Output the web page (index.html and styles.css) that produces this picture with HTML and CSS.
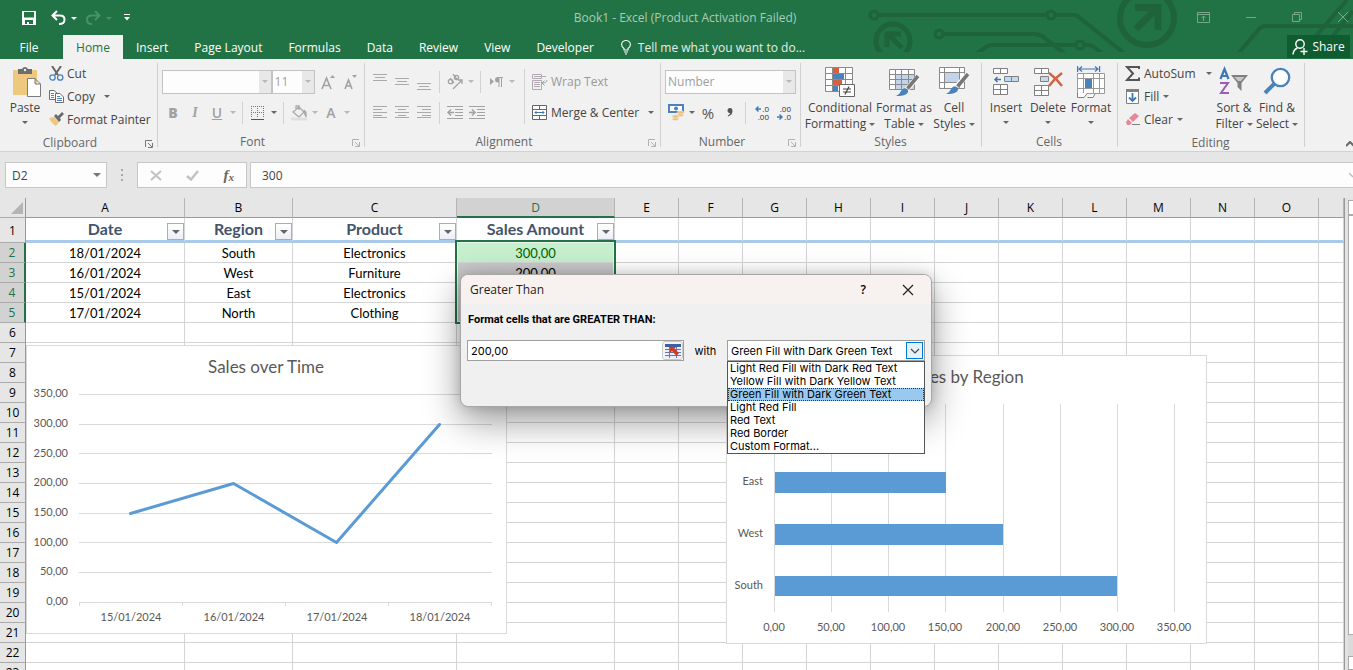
FILE: index.html
```html
<!DOCTYPE html>
<html lang="en">
<head>
<meta charset="utf-8">
<title>Book1 - Excel</title>
<link rel="stylesheet" href="styles.css">
</head>
<body>
<div class="app">
  <header class="top">
    <svg class="decor" width="503" height="52" viewBox="0 0 503 52" fill="none" stroke="#1e633b" aria-hidden="true">
      <g stroke-width="3">
        <circle cx="24" cy="15" r="4"/><circle cx="201" cy="15" r="4"/><circle cx="89" cy="34" r="4"/><circle cx="230" cy="45" r="4"/>
      </g>
      <g stroke-width="4">
        <path d="M29 15H196M206 15H223Q227 15 230 18L275 54M94 34H184Q188 34 192 36L215 54M126 54L136 47Q139 45 143 45H225M235 45Q240 44 244 47L253 54"/>
        <path d="M388 54L409 29Q412 26 416 26H503M465 37L497 0M482 37L503 11"/>
      </g>
      <circle cx="297" cy="18" r="27" stroke-width="6"/><circle cx="43" cy="41" r="17" stroke-width="5"/>
      <path d="M285 7.500H308V30M306 9L286 29" stroke-width="7"/>
      <path d="M37 47V34H51M38 34L52 48" stroke-width="5"/>
    </svg>
    <div class="titlebar">
      <div class="quick">
        <button class="ic" aria-label="Save"><svg width="14" height="14" viewBox="0 0 14 14"><path fill="#fff" fill-rule="evenodd" d="M0 0H14V14H0ZM2 1V6.500H12V1ZM3 9V13H5V11H7V13H11V9Z"/></svg></button>
        <button class="ic undo" aria-label="Undo"><svg width="25" height="14" viewBox="0 0 25 14"><path fill="none" stroke="#fff" stroke-width="2" d="M6 0L1.500 4.500L6 9M2 4.500H9Q13.500 4.500 13.500 8.500Q13.500 13 8 13"/><path fill="#fff" d="M20 6H26L23 9Z"/></svg></button>
        <button class="ic redo" aria-label="Redo"><svg width="26" height="14" viewBox="0 0 26 14"><path fill="none" stroke="#4b8f69" stroke-width="2" d="M9 0L13.500 4.500L9 9M13 4.500H6Q1 4.500 1 8.500Q1 13 6 13"/><path fill="#4b8f69" d="M20 6H26L23 9Z"/></svg></button>
        <button class="ic" aria-label="Customize Quick Access Toolbar"><svg width="6" height="7" viewBox="0 0 6 7"><path fill="#fff" d="M0 0H6V1H0ZM0 3H6L3 6.500Z"/></svg></button>
      </div>
      <h1 class="doc">Book1 - Excel (Product Activation Failed)</h1>
      <div class="wins">
        <button class="ic" aria-label="Ribbon Display Options"><svg width="13" height="11" viewBox="0 0 13 11" fill="none" stroke="#79a78d"><path d="M.5.5H12.500V10.500H.5ZM.5 2.500H12.500M6.500 9V4M4.500 6L6.500 4L8.500 6"/></svg></button>
        <button class="ic" aria-label="Minimize"><svg width="10" height="11" viewBox="0 0 10 11" stroke="#79a78d"><path d="M0 5.500H10"/></svg></button>
        <button class="ic" aria-label="Restore"><svg width="10" height="11" viewBox="0 0 10 11" fill="none" stroke="#79a78d"><path d="M.5 2.500H7.500V9.500H.5ZM2.500 2.500V.5H9.500V7.500H7.500"/></svg></button>
        <button class="ic" aria-label="Close"><svg width="10" height="11" viewBox="0 0 10 11" stroke="#79a78d"><path d="M0 0L10 10M10 0L0 10"/></svg></button>
      </div>
    </div>
    <nav class="tabs">
      <button class="tab file">File</button>
      <button class="tab active">Home</button>
      <button class="tab">Insert</button>
      <button class="tab">Page Layout</button>
      <button class="tab">Formulas</button>
      <button class="tab">Data</button>
      <button class="tab">Review</button>
      <button class="tab">View</button>
      <button class="tab">Developer</button>
      <button class="tell"><svg width="10" height="15" viewBox="0 0 10 15" fill="none" stroke="#fff"><path d="M3 10V8.500Q.6 7 .6 4.600A4.400 4.100 0 0 1 9.400 4.600Q9.400 7 7 8.500V10ZM3 12H7M4 14H6" stroke-width="1.100"/></svg>Tell me what you want to do...</button>
      <button class="share"><svg width="16" height="16" viewBox="0 0 16 16" fill="none" stroke="#fff" stroke-width="1.400"><circle cx="8" cy="5" r="4.200"/><path d="M1 15.500Q1.500 10.500 5.500 9M8.500 12.500H15.500M12 9V16"/></svg>Share</button>
    </nav>
  </header>

  <div class="ribbon">
    <section class="group g-clip">
      <div class="body">
        <button class="big paste"><svg width="32" height="30" viewBox="-4 0 32 30"><path fill="#edc87e" d="M0 3H24V28H0Z"/><path fill="#6d6d6d" d="M5 2H9Q10 0 12 0Q14 0 15 2H19V7H5Z"/><circle cx="12" cy="3" r="1.200" fill="#f1f1f1"/><path fill="#fff" stroke="#7c7c7c" d="M14.500 11.500H22L27.500 17V29.500H14.500ZM22 11.500V17H27.500"/></svg><span>Paste</span><i class="caret"></i></button>
        <div class="stack">
          <button class="row"><svg width="15" height="15" viewBox="0 0 15 15" fill="none"><path stroke="#666" stroke-width="2" d="M3 0L9 9M12 0L6 9"/><circle cx="3.500" cy="11.500" r="2.700" stroke="#4a82bb" stroke-width="1.300"/><circle cx="11.200" cy="11.500" r="2.700" stroke="#4a82bb" stroke-width="1.300"/></svg>Cut</button>
          <button class="row"><svg width="15" height="15" viewBox="0 0 15 15"><path fill="#fff" stroke="#6d6d6d" d="M.5 1.500H5L8.500 4.500V10.500H.5Z"/><path fill="#fff" stroke="#6d6d6d" d="M6.500 4.500H11L14.500 8V13.500H6.500Z"/><path stroke="#4a82bb" d="M2 4.500H5M2 6.500H5M2 8.500H5M8 7.500H11M8 9.500H13M8 11.500H13"/></svg>Copy<i class="caret wide"></i></button>
          <button class="row"><svg width="15" height="15" viewBox="0 0 15 15"><path fill="#edc87e" d="M0 6L5 5L10 10L7 14Q3 12 0 6Z"/><path fill="#6d6d6d" d="M5 4L7 2L9 4L13 0L15 2L11 6L12 8L10 10Z"/></svg>Format Painter</button>
        </div>
      </div>
      <div class="cap">Clipboard<svg class="launch dark" width="8" height="8" viewBox="0 0 8 8"><path d="M.5 7V.5H7M3 3L7 7M7.500 3V7.500H3"/></svg></div>
    </section>

    <section class="group g-font">
      <div class="body lines">
        <div class="line">
          <span class="combo fname"><input type="text" aria-label="Font" value=""><i class="caret dim"></i></span>
          <span class="combo fsize"><input type="text" aria-label="Font size" value="11"><i class="caret dim"></i></span>
          <button class="w22" aria-label="Increase font size"><svg width="15" height="16" viewBox="0 0 15 16"><path fill="none" stroke="#a2a2a2" stroke-width="1.600" d="M1 15L5.500 4L10 15M2.500 11.500H8.500"/><path fill="#a2a2a2" d="M9 4H14L11.500 1Z"/></svg></button>
          <button class="w22" aria-label="Decrease font size"><svg width="15" height="16" viewBox="0 0 15 16"><path fill="none" stroke="#a2a2a2" stroke-width="1.600" d="M2 15L5.500 6L9 15M3.500 12H7.500"/><path fill="#a2a2a2" d="M9 1H14L11.500 4Z"/></svg></button>
        </div>
        <div class="line">
          <button class="w22 fmt"><b>B</b></button><button class="w22 fmt it">I</button><button class="w22 fmt"><u>U</u></button><i class="caret dim w10"></i><i class="sep"></i>
          <button class="w22"><svg width="14" height="14" viewBox="0 0 14 14"><path fill="none" stroke="#777" stroke-dasharray="1 1" d="M0 .5H13M.5 0V12M6.500 0V12M12.500 0V12M0 6.500H13"/><path stroke="#555" d="M0 13.500H13"/></svg></button><i class="caret w10"></i><i class="sep"></i>
          <button class="w22"><svg width="18" height="16" viewBox="0 0 18 16" fill="none" stroke="#aaa"><path stroke-width="1.300" d="M3 7L9 2L14 7L9 12ZM6 5V1H9V5"/><path fill="#aaa" d="M14 5Q17 6 16 12L14 8Z"/><path stroke="#e2dede" stroke-width="3" d="M1 14H17"/></svg></button><i class="caret dim w10"></i>
          <button class="w22 fmt">A</button><i class="caret dim w10"></i>
        </div>
      </div>
      <div class="cap">Font<svg class="launch" width="8" height="8" viewBox="0 0 8 8"><path d="M.5 7V.5H7M3 3L7 7M7.500 3V7.500H3"/></svg></div>
    </section>

    <section class="group g-align">
      <div class="body">
        <div class="lines">
          <div class="line">
            <button class="w22"><svg width="14" height="16" viewBox="0 0 14 16" stroke="#aaa"><path d="M0 .5H14M2 3.500H12M0 6.500H14"/></svg></button>
            <button class="w22"><svg width="14" height="16" viewBox="0 0 14 16" stroke="#aaa"><path d="M0 4.500H14M2 7.500H12M0 10.500H14"/></svg></button>
            <button class="w22"><svg width="14" height="16" viewBox="0 0 14 16" stroke="#aaa"><path d="M0 9.500H14M2 12.500H12M0 15.500H14"/></svg></button><i class="sep"></i>
            <button class="w22"><svg width="16" height="16" viewBox="0 0 16 16" fill="none" stroke="#a2a2a2" stroke-width="1.300"><circle cx="3.500" cy="7.500" r="2.200"/><path d="M3 4L7 9M6 0L10.500 6"/><circle cx="9.500" cy="3.500" r="2.100"/><path d="M6 15L15 6M11 6H15V10"/></svg></button><i class="caret dim w10"></i><i class="sep"></i>
            <button class="w22"><svg width="13" height="10" viewBox="0 0 13 10"><path fill="#a2a2a2" d="M0 1L4 4.500L0 8ZM8 0H13V1H12V10H11V1H9.500V10H8.500V5.500Q5 5.500 5 3Q5 0 8 0Z"/></svg></button><i class="caret dim w10"></i>
          </div>
          <div class="line">
            <button class="w22"><svg width="14" height="13" viewBox="0 0 14 13" stroke="#aaa"><path d="M0 .5H14M0 3.500H9M0 6.500H14M0 9.500H9M0 11.500H14"/></svg></button>
            <button class="w22"><svg width="14" height="13" viewBox="0 0 14 13" stroke="#aaa"><path d="M0 .5H14M3 3.500H11M0 6.500H14M3 9.500H11M0 11.500H14"/></svg></button>
            <button class="w22"><svg width="14" height="13" viewBox="0 0 14 13" stroke="#aaa"><path d="M0 .5H14M5 3.500H14M0 6.500H14M5 9.500H14M0 11.500H14"/></svg></button><i class="sep"></i>
            <button class="w22"><svg width="16" height="13" viewBox="0 0 16 13" stroke="#a2a2a2" fill="none"><path d="M0 .5H16M8 3.500H16M8 6.500H16M8 9.500H16M0 12.500H16"/><path stroke-width="1.500" d="M1 6.500H7M4 3.500L1 6.500L4 9.500"/></svg></button>
            <button class="w22"><svg width="16" height="13" viewBox="0 0 16 13" stroke="#a2a2a2" fill="none"><path d="M0 .5H16M8 3.500H16M8 6.500H16M8 9.500H16M0 12.500H16"/><path stroke-width="1.500" d="M0 6.500H6M3 3.500L6 6.500L3 9.500"/></svg></button>
          </div>
        </div>
        <i class="sep tall"></i>
        <div class="lines wrap">
          <div class="line"><button class="row off"><svg width="16" height="16" viewBox="0 0 16 16" fill="none" stroke="#b3a9b3"><path d="M.5.5H9.500V4.500H.5ZM.5 6.500H9.500V15.500H.5ZM2 2.500H14M2 8.500H8M2 10.500H8M2 12.500H8"/><path stroke="#a2a2a2" d="M15 6Q15 9 10 9M12.500 6.500L10 9L12.500 11.500"/></svg>Wrap Text</button></div>
          <div class="line"><button class="row"><svg width="16" height="16" viewBox="0 0 16 16" fill="none" stroke="#666"><path fill="#fff" d="M.5.500H14.500V14.500H.5ZM.5 4.500H14.500M.5 10.500H14.500M7.500 0V4M7.500 11V15"/><path stroke="#3d78b4" d="M3 7.500H12M4.500 6L3 7.500L4.500 9M10.500 6L12 7.500L10.500 9"/></svg>Merge &amp; Center<i class="caret wide"></i></button></div>
        </div>
      </div>
      <div class="cap">Alignment<svg class="launch" width="8" height="8" viewBox="0 0 8 8"><path d="M.5 7V.5H7M3 3L7 7M7.500 3V7.500H3"/></svg></div>
    </section>

    <section class="group g-num">
      <div class="body lines">
        <div class="line"><span class="combo nfmt"><select aria-label="Number format"><option>Number</option></select><i class="caret dim"></i></span></div>
        <div class="line">
          <button class="w22"><svg width="16" height="17" viewBox="0 0 16 17"><path fill="#4a82bb" d="M0 0H16V9H0Z"/><path fill="#fff" d="M2 2H14V7H2Z"/><circle cx="8" cy="4.500" r="2" fill="#4a82bb"/><g fill="#edc07c" stroke="#f1f1f1" stroke-width=".6"><ellipse cx="12.500" cy="11" rx="3.300" ry="1.700"/><ellipse cx="12.500" cy="8.500" rx="3.300" ry="1.700"/><ellipse cx="7.500" cy="15" rx="3.300" ry="1.700"/><ellipse cx="7.500" cy="12.500" rx="3.300" ry="1.700"/></g></svg></button><i class="caret w10"></i>
          <button class="w22 pct">%</button><button class="w22 comma"><svg width="6" height="9" viewBox="0 0 6 9"><path fill="#555" d="M3 0Q5.500 0 5.500 3Q5.500 7 1 8.500L.8 7.500Q3 6.500 3 5Q.5 5 .5 2.500Q.5 0 3 0Z"/></svg></button><i class="sep"></i>
          <button class="w22 dec" aria-label="Increase decimal"><span><svg width="6" height="6" viewBox="0 0 6 6"><path fill="none" stroke="#3d78b4" stroke-width="1.400" d="M6 3H1M3.500 .5L1 3L3.500 5.500"/></svg>.0</span><span>.00</span></button>
          <button class="w22 dec" aria-label="Decrease decimal"><span>.00</span><span><svg width="6" height="6" viewBox="0 0 6 6"><path fill="none" stroke="#3d78b4" stroke-width="1.400" d="M0 3H5M2.500 .5L5 3L2.500 5.500"/></svg>.0</span></button>
        </div>
      </div>
      <div class="cap">Number<svg class="launch" width="8" height="8" viewBox="0 0 8 8"><path d="M.5 7V.5H7M3 3L7 7M7.500 3V7.500H3"/></svg></div>
    </section>

    <section class="group g-styles">
      <div class="body">
        <button class="big w72"><svg width="30" height="30" viewBox="0 0 30 30"><path fill="#fff" d="M.5.500H27.500V24.500H.5Z"/><path fill="#d65f3d" d="M8 1H14V6H8ZM8 13H17V18H8Z"/><path fill="#4a82bb" d="M8 7H19V12H8ZM8 19H13V24H8Z"/><path fill="none" stroke="#8a8a8a" d="M.5.500H27.500V24.500H.5ZM.5 6.500H27.500M.5 12.500H27.500M.5 18.500H27.500M7.500 0V25M20.500 0V25"/><path fill="#fff" stroke="#666" d="M14.500 17.500H29.500V29.500H14.500Z"/><path stroke="#444" stroke-width="1.200" d="M18 22H26M18 25H26M24 19.500L20 27.500"/></svg><span>Conditional<br>Formatting<i class="caret in"></i></span></button>
        <button class="big w56"><svg width="30" height="30" viewBox="0 0 30 30"><path fill="#fff" d="M.5 2.500H25.500V22.500H.5Z"/><path fill="#c3d4ea" d="M7 8H25V22H7Z"/><path fill="none" stroke="#8a8a8a" d="M.5 2.500H25.500V22.500H.5ZM.5 7.500H25.500M.5 12.500H25.500M.5 17.500H25.500M6.500 2V22M12.500 2V22M19.500 2V22"/><path stroke="#fff" stroke-width="5" d="M18 22L29 10"/><path stroke="#777" stroke-width="3.500" d="M18.500 21.500L29 9"/><path fill="#4a82bb" d="M7 29Q11 27 12 24Q15 19 19 23Q20 29 7 29Z"/></svg><span>Format as<br>Table<i class="caret in"></i></span></button>
        <button class="big w44"><svg width="30" height="30" viewBox="0 0 30 30"><path fill="#fff" d="M.5.500H25.500V20.500H.5Z"/><path fill="#c3d4ea" d="M6 6H20V16H6Z"/><path fill="none" stroke="#8a8a8a" d="M.5.500H25.500V21.500H.5ZM.5 5.500H25.500M.5 15.500H25.500M5.500 0V21M20.500 0V21"/><path stroke="#fff" stroke-width="5" d="M18 19L29 7"/><path stroke="#777" stroke-width="3.500" d="M18.500 19.500L29 7"/><path fill="#4a82bb" d="M7 27Q11 25 12 22Q15 17 19 21Q20 27 7 27Z"/></svg><span>Cell<br>Styles<i class="caret in"></i></span></button>
      </div>
      <div class="cap">Styles</div>
    </section>

    <section class="group g-cells">
      <div class="body">
        <button class="big w42"><svg width="28" height="30" viewBox="0 0 28 30" stroke="#808080"><path fill="#fff" d="M1.500 1.500H15.500V6.500H1.500ZM8.500 1V7M1.500 17.500H15.500V27.500H1.500ZM8.500 17V28M1 22.500H16"/><path fill="#c3d9ee" d="M12.500 9.500H26.500V14.500H12.500ZM19.500 9V15"/><path fill="none" stroke="#3d78b4" stroke-width="1.500" d="M9 12.500H3M5.500 10L3 12.500L5.500 15"/></svg><span>Insert</span><i class="caret"></i></button>
        <button class="big w42"><svg width="30" height="30" viewBox="0 0 30 30" stroke="#808080"><path fill="#fff" d="M1.500 1.500H15.500V6.500H1.500ZM8.500 1V7M1.500 18.500H15.500V28.500H1.500ZM8.500 18V29M1 23.500H16"/><path fill="#c3d9ee" d="M7.500 9.500H15.500V14.500H7.500Z"/><path fill="none" stroke="#d65f3d" stroke-width="2.400" d="M16 6Q23 11 29 19M29 6Q22 11 16 19"/></svg><span>Delete</span><i class="caret"></i></button>
        <button class="big w44"><svg width="28" height="32" viewBox="0 0 28 32"><path fill="none" stroke="#3d78b4" stroke-width="1.200" d="M.6 0V6M22.600 0V6M2 3H21M5 .5L2 3L5 5.500M18 .5L21 3L18 5.500"/><path fill="#fff" stroke="#999" d="M.5 7.500H27.500V27.500H.5ZM.5 12.500H27.500M.5 22.500H27.500M6.500 7V27M16.500 7V27M22.500 7V27"/><path fill="#4a82bb" d="M8 13H15V22H8Z"/><path fill="#fff" stroke="#808080" d="M.5 27V31.500H7L10.500 27M10.500 31.500H16L18.500 27"/></svg><span>Format</span><i class="caret"></i></button>
      </div>
      <div class="cap">Cells</div>
    </section>

    <section class="group g-edit">
      <div class="body">
        <div class="stack">
          <button class="row"><svg width="15" height="15" viewBox="0 0 15 15"><path fill="none" stroke="#555" stroke-width="2" d="M14 3V1H2L8 7.500L2 14H14V11.500"/></svg>AutoSum<i class="caret wide"></i></button>
          <button class="row"><svg width="15" height="15" viewBox="0 0 15 15"><path fill="#fff" stroke="#808080" d="M1.500.5H13.500V14.500H1.500Z"/><path fill="#808080" d="M1 0H14V3H1Z"/><path fill="none" stroke="#3d78b4" stroke-width="1.800" d="M7.500 4V12M4 8.500L7.500 12L11 8.500"/></svg>Fill<i class="caret in"></i></button>
          <button class="row"><svg width="15" height="15" viewBox="0 0 15 15"><path fill="#e8879a" d="M4 6L10 1L14 4L8 10Z"/><path fill="#e8879a" d="M3 7L7 11L5 13H2L1 10Z"/><path stroke="#808080" d="M7 12.500H15"/></svg>Clear<i class="caret in"></i></button>
        </div>
        <button class="big w44"><svg width="30" height="30" viewBox="0 0 30 30"><path fill="none" stroke="#3d78b4" stroke-width="2.200" d="M1.500 12L5.500 2L9.500 12M3 9H8"/><path fill="none" stroke="#9a5fb5" stroke-width="2" d="M1 16H9L2 26H10"/><path fill="#808080" d="M12 8H29L22.500 16V24L18.500 20V16Z"/><path fill="#c8c8c8" d="M15.500 10H25.500L22 14H19Z"/></svg><span>Sort &amp;<br>Filter<i class="caret in"></i></span></button>
        <button class="big w42"><svg width="28" height="30" viewBox="0 0 28 30"><circle cx="17.500" cy="10.500" r="8.700" fill="#fff" stroke="#4a82bb" stroke-width="2.300"/><path stroke="#4a82bb" stroke-width="4" d="M11 17L2 26"/></svg><span>Find &amp;<br>Select<i class="caret in"></i></span></button>
      </div>
      <div class="cap">Editing</div>
    </section>
    <button class="ic collapse" aria-label="Collapse the Ribbon"><svg width="8" height="6" viewBox="0 0 8 6" fill="none" stroke="#666" stroke-width="2"><path d="M0 5L4 1L8 5"/></svg></button>
  </div>

  <div class="formula">
    <span class="box namebox"><input type="text" aria-label="Name Box" value="D2"><i class="caret large"></i></span>
    <svg class="dots" width="2" height="12" viewBox="0 0 2 12"><path fill="#a8a8a8" d="M0 0H2V2H0ZM0 5H2V7H0ZM0 10H2V12H0Z"/></svg>
    <span class="box fx">
      <button class="ic" aria-label="Cancel"><svg width="12" height="11" viewBox="0 0 12 11" stroke="#c2c2c2" stroke-width="2"><path d="M1 1L11 10M11 1L1 10"/></svg></button>
      <button class="ic" aria-label="Enter"><svg width="13" height="11" viewBox="0 0 13 11" fill="none" stroke="#c2c2c2" stroke-width="2.500"><path d="M1 6L5 9.500L12 1"/></svg></button>
      <button class="ic fxb">f<small>x</small></button>
    </span>
    <span class="box content"><input type="text" aria-label="Formula Bar" value="300"><svg width="4" height="6" viewBox="0 0 4 6" fill="none" stroke="#bbb" stroke-width="1.500"><path d="M0 1L4 5"/></svg></span>
  </div>

  <main class="work">
    <div class="sheet">
      <table class="grid">
        <colgroup><col class="c-h"><col class="c-a"><col class="c-b"><col class="c-c"><col class="c-d"><col class="c-n" span="11"><col></colgroup>
        <thead><tr><th class="corner"><svg width="12" height="12" viewBox="0 0 12 12"><path fill="#b4b4b4" d="M12 0V12H0Z"/></svg></th><th>A</th><th>B</th><th>C</th><th class="on">D</th><th>E</th><th>F</th><th>G</th><th>H</th><th>I</th><th>J</th><th>K</th><th>L</th><th>M</th><th>N</th><th>O</th><th></th></tr></thead>
        <tbody id="rows"></tbody>
      </table>
      <div class="selection"></div>

      <svg class="chart c1" width="481" height="289" viewBox="0 0 481 289" role="img" aria-label="Sales over Time">
        <rect x=".5" y=".5" width="480" height="288" fill="#fff" stroke="#d9d9d9"/>
        <text class="ttl" x="240" y="28">Sales over Time</text>
        <path stroke="#d9d9d9" fill="none" d="M53 49.500H466M53 79.500H466M53 108.500H466M53 138.500H466M53 168.500H466M53 197.500H466M53 227.500H466M53 257.500H466M53.500 257V261M156.500 257V261M259.500 257V261M362.500 257V261M465.500 257V261"/>
        <g class="end"><text x="42" y="52">350,00</text><text x="42" y="82">300,00</text><text x="42" y="112">250,00</text><text x="42" y="141">200,00</text><text x="42" y="171">150,00</text><text x="42" y="201">100,00</text><text x="42" y="230">50,00</text><text x="42" y="260">0,00</text></g>
        <g class="mid"><text x="105" y="276">15/01/2024</text><text x="208" y="276">16/01/2024</text><text x="311" y="276">17/01/2024</text><text x="414" y="276">18/01/2024</text></g>
        <path fill="none" stroke="#5b9bd5" stroke-width="3" stroke-linejoin="round" stroke-linecap="round" d="M104.500 168.500L207.500 138.500L310.500 197.500L413.500 79.500"/>
      </svg>

      <svg class="chart c2" width="481" height="289" viewBox="0 0 481 289" role="img" aria-label="Sales by Region">
        <rect x=".5" y=".5" width="480" height="288" fill="#fff" stroke="#d9d9d9"/>
        <text class="ttl" x="240" y="28">Sales by Region</text>
        <path stroke="#d9d9d9" d="M48.500 49V257M105.500 49V257M162.500 49V257M219.500 49V257M277.500 49V257M334.500 49V257M391.500 49V257M448.500 49V257"/>
        <path fill="#5b9bd5" d="M49 117H220V138H49ZM49 169H277V190H49ZM49 221H391V241H49Z"/>
        <g class="end"><text x="37" y="130">East</text><text x="37" y="182">West</text><text x="37" y="234">South</text></g>
        <g class="mid"><text x="48" y="276">0,00</text><text x="105" y="276">50,00</text><text x="162" y="276">100,00</text><text x="219" y="276">150,00</text><text x="277" y="276">200,00</text><text x="334" y="276">250,00</text><text x="391" y="276">300,00</text><text x="448" y="276">350,00</text></g>
      </svg>

      <div class="dialog" role="dialog" aria-labelledby="dlg-title">
        <div class="dtitle"><span id="dlg-title">Greater Than</span><button class="ic help" aria-label="Help">?</button><button class="ic" aria-label="Close"><svg width="12" height="12" viewBox="0 0 12 12" stroke="#222" stroke-width="1.200"><path d="M1 1L11 11M11 1L1 11"/></svg></button></div>
        <div class="dbody">
          <label class="dlabel" for="threshold">Format cells that are GREATER THAN:</label>
          <div class="drow">
            <span class="refbox"><input id="threshold" type="text" value="200,00"><button aria-label="Select range"><svg width="16" height="14" viewBox="0 0 16 14"><path fill="#e9f0fb" d="M0 0H16V14H0Z"/><path fill="#3f5f9f" d="M0 0H16V3H0Z"/><path stroke="#5b7ab8" d="M0 5.500H16M0 8.500H16M0 11.500H16M4.500 3V14M11.500 3V14"/><path fill="#d8381e" d="M5 3H11L9.500 4.500L14 9L11.500 12L7 7L5 9Z"/></svg></button></span>
            <label for="fmt">with</label>
            <span class="pick">
              <select id="fmt"><option>Green Fill with Dark Green Text</option></select>
              <span class="drop"><svg width="10" height="6" viewBox="0 0 10 6" fill="none" stroke="#444" stroke-width="1.100"><path d="M1 1L5 5L9 1"/></svg></span>
              <ul class="list" role="listbox">
                <li role="option">Light Red Fill with Dark Red Text</li>
                <li role="option">Yellow Fill with Dark Yellow Text</li>
                <li role="option" aria-selected="true" class="sel">Green Fill with Dark Green Text</li>
                <li role="option">Light Red Fill</li>
                <li role="option">Red Text</li>
                <li role="option">Red Border</li>
                <li role="option">Custom Format...</li>
              </ul>
            </span>
          </div>
        </div>
      </div>
    </div>
    <div class="vscroll"><span class="cell up"></span><span class="cell thumb"></span><span class="gap"></span><span class="cell down"></span></div>
  </main>
</div>
<script src="grid.js"></script>
</body>
</html>
```

FILE: grid.js
```js
const data = [
  ["Date", "Region", "Product", "Sales Amount"],
  ["18/01/2024", "South", "Electronics", "300,00"],
  ["16/01/2024", "West", "Furniture", "200,00"],
  ["15/01/2024", "East", "Electronics", ""],
  ["17/01/2024", "North", "Clothing", ""]
];
const body = document.getElementById("rows");
for (let r = 1; r <= 23; r++) {
  const tr = document.createElement("tr");
  if (r === 1) tr.className = "head";
  const th = document.createElement("th");
  th.textContent = r;
  if (r >= 2 && r <= 5) th.className = "on";
  tr.appendChild(th);
  for (let c = 0; c < 16; c++) {
    const td = document.createElement("td");
    const v = data[r - 1] && data[r - 1][c];
    if (v) td.textContent = v;
    if (v && r === 1) {
      const b = document.createElement("button");
      b.className = "filter";
      b.setAttribute("aria-label", "Filter " + v);
      b.innerHTML = '<i class="caret large"></i>';
      td.appendChild(b);
    }
    if (c === 3 && r === 2) td.className = "good";
    if (c === 3 && r > 2 && r < 6) td.className = "picked";
    tr.appendChild(td);
  }
  body.appendChild(tr);
}
```

FILE: styles.css
```css
* { box-sizing: border-box; }
body { margin: 0; font-family: "Open Sans", "Noto Sans", sans-serif; font-size: 12px; color: #444; }
button, input, select { font: inherit; color: inherit; margin: 0; padding: 0; border: 0; background: none; }
button { display: flex; align-items: center; justify-content: center; white-space: nowrap; }
svg { display: block; flex: none; }
.app { height: 100vh; display: flex; flex-direction: column; overflow: hidden; background: #e6e6e6; }

/* title bar and tabs */
.top { position: relative; background: #217346; color: #fff; flex: none; }
.decor { position: absolute; top: 0; right: 0; }
.titlebar { position: relative; height: 35px; display: flex; align-items: center; justify-content: space-between; }
.quick { display: flex; align-items: center; flex: 1; padding-left: 22px; height: 30px; }
.undo { margin-left: 15px; }
.redo { margin-left: 10px; }
.quick .ic:last-child { margin-left: 12px; }
.undo svg { overflow: visible; }
.doc { margin: 0; font-size: 12px; font-weight: 400; color: #a9cbb7; }
.wins { flex: 1; display: flex; justify-content: flex-end; gap: 36px; height: 31px; align-items: center; padding-right: 5px; }
.tabs { position: relative; height: 24px; display: flex; }
.tab { padding: 0 13px; }
.tab.file { width: 58px; margin-right: 5px; }
.tab.active { width: 60px; background: #f1f1f1; color: #217346; }
.tell { margin-left: 14px; gap: 7px; color: #e3efe8; }
.share { margin-left: auto; margin-right: 3px; width: 63px; height: 23px; background: #0f5c30; gap: 4px; }

/* ribbon */
.ribbon { position: relative; height: 93px; flex: none; display: flex; background: #f1f1f1; border-bottom: 1px solid #d2d2d2; }
.group { position: relative; display: flex; flex-direction: column; flex: none; }
.group::after { content: ""; position: absolute; right: 0; top: 4px; height: 84px; width: 1px; background: #d0d0d0; }
.g-clip { width: 158px; }
.g-font { width: 207px; }
.g-align { width: 296px; }
.g-num { width: 140px; }
.g-styles { width: 181px; }
.g-cells { width: 136px; }
.g-edit { width: 187px; }
.body { height: 75px; display: flex; padding: 0 4px; }
.g-styles .body, .g-cells .body { padding-left: 3px; }
.cap { position: relative; height: 18px; line-height: 18px; text-align: center; padding-right: 18px; color: #666; }
.g-styles .cap, .g-cells .cap, .g-edit .cap { padding-right: 2px; }
.launch { position: absolute; right: 5px; top: 6px; fill: none; stroke: #b0b0b0; }
.launch.dark { stroke: #777; }
.caret { flex: none; width: 0; height: 0; border: 3px solid transparent; border-top-color: #666; border-bottom: 0; }
.caret.large { border-width: 4px; border-bottom: 0; }
.caret.dim { border-top-color: #b8b8b8; }
.caret.w10 { margin: 0 2px; }
.caret.in { display: inline-block; margin-left: 3px; vertical-align: middle; }
.caret.wide { margin-left: 6px; }
.big { flex-direction: column; justify-content: flex-start; padding-top: 7px; line-height: 16px; }
.big svg { height: 32px; margin-bottom: 2px; overflow: visible; }
.big > .caret { margin-top: 5px; }
.paste { width: 42px; }
.w72 { width: 72px; } .w56 { width: 56px; } .w44 { width: 44px; } .w42 { width: 42px; }
.stack { display: flex; flex-direction: column; padding: 3px 0 3px 3px; flex: none; }
.stack .row { height: 23px; }
.row { justify-content: flex-start; gap: 3px; }
.row > .caret.in { margin-left: 0; }
.off { color: #999; }
.g-edit .stack { width: 90px; }
.g-edit .stack .row { gap: 4px; }
.lines { display: flex; flex-direction: column; padding-top: 7px; }
.line { height: 31px; display: flex; align-items: center; }
.w22 { width: 22px; height: 24px; flex: none; color: #a2a2a2; }
.sep { width: 1px; height: 22px; background: #d2d2d2; margin: 0 4px; flex: none; }
.sep.tall { height: 55px; margin: 10px 7px 0 5px; }
.g-align .body > .lines:first-child { width: 150px; }
.combo { height: 24px; display: flex; align-items: center; border: 1px solid #c3c3c3; color: #a0a0a0; padding-right: 3px; background: linear-gradient(to left, #e8e8e8 12px, #fdfdfd 12px); }
.combo input, .combo select { flex: 1; width: 0; height: 100%; padding-left: 2px; appearance: none; }
.fname { width: 111px; }
.fsize { width: 44px; margin-right: 2px; }
.nfmt { width: 131px; }
.fmt { font-size: 14px; font-weight: 600; }
.it { font-family: "Liberation Serif", serif; font-style: italic; }
.pct { font-size: 15px; color: #555; }
.dec { flex-direction: column; align-items: flex-end; font-size: 8px; line-height: 8px; color: #333; padding-right: 3px; }
.dec span { display: flex; align-items: center; gap: 1px; }
.collapse { position: absolute; right: -1px; bottom: 4px; }

/* formula bar */
.formula { flex: none; height: 46px; padding: 10px 0 10px 5px; display: flex; }
.box { height: 26px; background: #fdfdfd; border: 1px solid #c6c6c6; display: flex; align-items: center; }
.namebox { width: 102px; padding: 0 5px 0 6px; }
.box input { flex: 1; width: 0; }
.namebox .caret { border-top-color: #777; }
.dots { margin: 7px 14px 0; }
.fx { width: 110px; justify-content: space-around; margin-right: 3px; }
.fxb { font-family: "Liberation Serif", serif; font-style: italic; font-weight: 700; font-size: 15px; color: #666; }
.fxb small { font-size: 11px; padding-top: 4px; }
.content { flex: 1; padding-left: 11px; border-right: 0; }

/* worksheet */
.work { flex: 1; min-height: 0; display: flex; }
.sheet { position: relative; flex: 1; min-width: 0; overflow: hidden; }
.grid { width: 100%; table-layout: fixed; border-collapse: separate; border-spacing: 0; background: #fff; border-right: 1px solid #999; font-family: Lato, "Open Sans", sans-serif; font-size: 13px; }
.c-h { width: 26px; } .c-a { width: 159px; } .c-b { width: 108px; } .c-c { width: 164px; } .c-d { width: 158px; } .c-n { width: 64px; }
.grid th, .grid td { padding: 0; height: 20px; line-height: 18px; text-align: center; color: #000; border-right: 1px solid #d4d4d4; border-bottom: 1px solid #d4d4d4; overflow: hidden; white-space: nowrap; }
.grid th { padding-top: 1px; font-family: "Open Sans", sans-serif; font-size: 12px; font-weight: 400; background: #e6e6e6; border-bottom-color: #ababab; border-right-color: #999; }
.grid thead th { border-right-color: #b5b5b5; border-bottom-color: #999; }
.grid thead .corner { border-right-color: #999; border-bottom-color: #ababab; }
.corner svg { margin-left: 11px; }
.grid th.on { background: #d2d2d2; color: #217346; }
.grid thead th.on { border-bottom: 2px solid #217346; padding-top: 2px; line-height: 16px; }
.grid tbody th.on { border-right: 2px solid #217346; }
.grid .head td { position: relative; height: 25px; line-height: 22px; border-bottom: 3px solid #a9cbe9; font-weight: 700; font-size: 16px; color: #44546a; }
.grid .head th { height: 25px; }
.filter { position: absolute; right: 0; bottom: 0; width: 17px; height: 17px; border: 1px solid #a9adb6; background: linear-gradient(#fff, #eceff5); }
.grid .good { background: #c6efce; color: #006100; }
.grid .picked { background: #c8c8c8; }
.selection { position: absolute; left: 455px; top: 42px; width: 161px; height: 84px; border: 2px solid #217346; box-shadow: inset 0 0 0 1px #e8f4ec; }

.vscroll { width: 8px; flex: none; padding: 2px 0 0 3px; display: flex; flex-direction: column; background: #e3e3e3; }
.cell { border: 1px solid #ababab; border-right: 0; background: #fff; }
.up { height: 15px; } .thumb { flex: 1; } .gap { height: 21px; background: #dadada; } .down { height: 14px; }

/* charts */
.chart { position: absolute; font-family: Lato, "Open Sans", sans-serif; font-size: 11px; fill: #595959; }
.c1 { left: 26px; top: 147px; }
.c2 { left: 726px; top: 157px; }
.chart .ttl { font-size: 17px; text-anchor: middle; }
.end { text-anchor: end; }
.mid { text-anchor: middle; }

/* dialog */
.dialog { position: absolute; left: 460px; top: 76px; width: 472px; height: 133px; border: 1px solid #a6a6a6; border-radius: 8px; background: #f0f0f0; box-shadow: 0 14px 36px rgba(0, 0, 0, .4), 0 0 12px rgba(0, 0, 0, .15); color: #000; font-family: Inter, "Open Sans", sans-serif; font-size: 11px; }
.dtitle { height: 29px; padding: 0 17px 0 9px; display: flex; align-items: center; background: #f7f2f0; border-radius: 7px 7px 0 0; font-family: "Open Sans", sans-serif; font-size: 12px; color: #222; }
.help { margin-left: auto; margin-right: 36px; color: #000; font-weight: 600; }
.dbody { padding: 9px 6px; }
.dlabel { display: block; height: 14px; line-height: 14px; padding-left: 1px; font-family: Roboto, sans-serif; font-weight: 700; }
.drow { display: flex; align-items: center; justify-content: space-between; margin-top: 13px; }
.refbox { width: 217px; height: 21px; display: flex; border: 1px solid #9f9f9f; background: #fff; }
.refbox input { flex: 1; width: 0; padding-left: 3px; }
.refbox button { width: 21px; border: 1px solid #c8c8c8; border-radius: 3px; background: #f4f4f4; }
.pick { position: relative; width: 198px; height: 21px; }
.pick select { width: 100%; height: 21px; padding-left: 3px; appearance: none; border: 1px solid #9f9f9f; background: #fff; }
.drop { position: absolute; right: 2px; top: 2px; width: 17px; height: 17px; border: 1px solid #0078d7; background: #e5f1fb; display: flex; align-items: center; justify-content: center; pointer-events: none; }
.list { position: absolute; left: 0; right: 0; top: 21px; margin: 0; padding: 0; list-style: none; background: #fff; border: 1px solid #555; line-height: 13px; }
.list li { height: 13px; padding-left: 2px; white-space: nowrap; }
.list .sel { background: #99c9ef; outline: 1px dotted #333; outline-offset: -1px; }
```
